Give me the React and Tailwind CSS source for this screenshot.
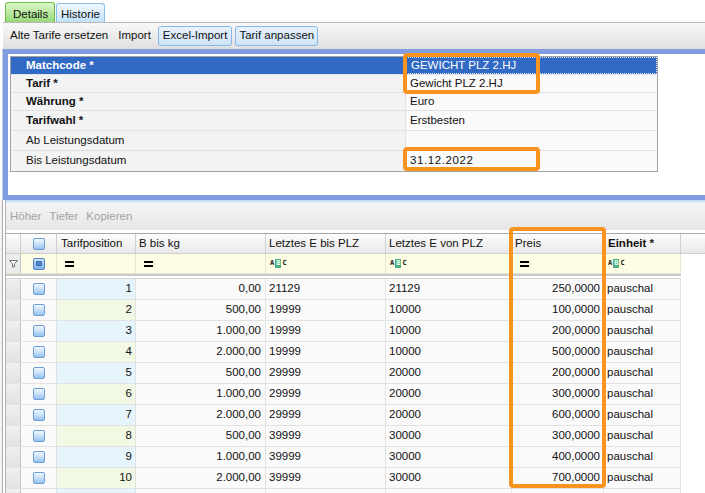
import React from "react";

const rows = [
    [1, "0,00", "21129", "21129", "250,0000"],
    [2, "500,00", "19999", "10000", "100,0000"],
    [3, "1.000,00", "19999", "10000", "200,0000"],
    [4, "2.000,00", "19999", "10000", "500,0000"],
    [5, "500,00", "29999", "20000", "200,0000"],
    [6, "1.000,00", "29999", "20000", "300,0000"],
    [7, "2.000,00", "29999", "20000", "600,0000"],
    [8, "500,00", "39999", "30000", "300,0000"],
    [9, "1.000,00", "39999", "30000", "400,0000"],
    [10, "2.000,00", "39999", "30000", "700,0000"],
];

const props = [
    { label: "Matchcode *", bold: true, value: "GEWICHT PLZ 2.HJ", h: "h-[18px]", sel: true },
    { label: "Tarif *", bold: true, value: "Gewicht PLZ 2.HJ", h: "h-[18px]" },
    { label: "Währung *", bold: true, value: "Euro", h: "h-[18px]" },
    { label: "Tarifwahl *", bold: true, value: "Erstbesten", h: "h-[20px]" },
    { label: "Ab Leistungsdatum", bold: false, value: "", h: "h-[20px]" },
    { label: "Bis Leistungsdatum", bold: false, value: "31.12.2022", h: "h-[20px]", date: true },
];

function Check() {
    return (
        <div className="w-[12px] h-[12px] rounded-[2px] border border-[#6d9fd6] bg-gradient-to-b from-[#eef6fe] via-[#c9e1f8] to-[#93c0ec]" />
    );
}

function FilterCheck() {
    return (
        <div className="w-[12px] h-[12px] rounded-[2px] border border-[#4c84cb] bg-gradient-to-b from-[#cfe4fa] to-[#7fb1e6] flex items-center justify-center">
            <div className="w-[6px] h-[5px] bg-[#4f86cf] border border-[#3b6fb5]" />
        </div>
    );
}

function Equals() {
    return (
        <div className="flex flex-col gap-[2px]">
            <div className="w-[9px] h-[2px] bg-black" />
            <div className="w-[9px] h-[2px] bg-black" />
        </div>
    );
}

function Abc() {
    return (
        <div className="flex items-center font-['DejaVu_Sans_Mono',monospace] text-[7px] font-bold leading-[9px]">
            <span className="px-[1px]">A</span>
            <span className="px-[1px] bg-[#4fae84] text-[#e8fff2]">B</span>
            <span className="px-[1px]">C</span>
        </div>
    );
}

// column widths incl. right border
const W = {
    rh: "w-[15px]",
    cb: "w-[36px]",
    tp: "w-[79px]",
    bkg: "w-[130px]",
    bis: "w-[120px]",
    von: "w-[126px]",
    preis: "w-[92px]",
    einh: "w-[77px]",
};

export default function App() {
    return (
        <div className="relative w-[705px] h-[493px] overflow-hidden bg-white font-['Liberation_Sans',Arial,sans-serif] text-[11.5px] text-[#111]">
            {/* Tabs */}
            <div className="flex h-[22px] items-end pl-[5px] gap-[1px]">
                <div className="h-[20px] w-[50px] rounded-t-[3px] border border-b-0 border-[#6bbb47] bg-gradient-to-b from-[#dcf7c8] to-[#97da78] pl-[7px] pt-[3px]">
                    Details
                </div>
                <div className="h-[19px] w-[49px] rounded-t-[3px] border border-b-0 border-[#8bbfe8] bg-gradient-to-b from-[#f0f8fe] to-[#c2e2f9] pl-[4px] pt-[2px]">
                    Historie
                </div>
            </div>

            {/* Toolbar */}
            <div className="ml-[3px] h-[27px] border-t border-[#b8b8b8] bg-gradient-to-b from-[#f8f8f8] to-[#e0e0e0] flex items-center pl-[7px]">
                <span>Alte Tarife ersetzen</span>
                <span className="ml-[10px]">Import</span>
                <div className="ml-[7px] h-[20px] px-[4px] flex items-center rounded-[3px] border border-[#86b7e8] bg-gradient-to-b from-[#e8f3fd] to-[#cfe4f9]">
                    Excel-Import
                </div>
                <div className="ml-[3px] h-[20px] px-[3px] flex items-center rounded-[3px] border border-[#86b7e8] bg-gradient-to-b from-[#e8f3fd] to-[#cfe4f9]">
                    Tarif anpassen
                </div>
            </div>

            {/* Upper frame */}
            <div className="ml-[2px] border-l border-[#c7cfe0]">
                <div className="border-l-[5px] border-t-[5px] border-b-[5px] border-[#7f9de0] bg-white h-[151px] pl-[2px] pt-[2px]">
                    <div className="w-[648px] border border-[#a3a3a3]">
                        {props.map((p) => (
                            <div
                                key={p.label}
                                className={`flex ${p.h} border-b border-[#e2e2e2] last:border-b-0`}
                            >
                                <div
                                    className={`w-[395px] flex items-center pl-[15px] border-r border-[#e2e2e2] ${
                                        p.sel ? "bg-[#316ac5] text-white" : "bg-[#f3f3f3]"
                                    } ${p.bold ? "font-bold" : ""}`}
                                >
                                    {p.label}
                                </div>
                                <div
                                    className={`flex-1 flex items-center pl-[4px] ${
                                        p.sel
                                            ? "bg-[#316ac5] text-white border border-dotted border-[#dfe8f7]"
                                            : "bg-[#fafafa]"
                                    } ${p.date ? "tracking-[0.6px]" : ""}`}
                                >
                                    {p.value}
                                </div>
                            </div>
                        ))}
                    </div>
                </div>
            </div>

            {/* Lower section */}
            <div className="flex">
                <div className="w-[6px] flex">
                    <div className="w-[3px] border-r border-[#a8a8a8] bg-[#f4f4f4]" />
                    <div className="w-[3px] border-r border-[#b0b0b0] bg-white" />
                </div>
                <div className="flex-1">
                    <div className="h-[3px] bg-gradient-to-b from-[#bcd8f5] to-[#e2effb]" />
                    <div className="h-[27px] bg-gradient-to-b from-[#f5f5f5] to-[#e6e6e6] flex items-center pl-[4px] text-[#a3a3a3]">
                        <span>Höher</span>
                        <span className="ml-[8px]">Tiefer</span>
                        <span className="ml-[8px]">Kopieren</span>
                    </div>
                    <div className="h-[3px] bg-white" />

                    {/* Grid */}
                    <div className="border-t border-[#a9a9a9]">
                        {/* header */}
                        <div className="flex h-[20px] bg-gradient-to-b from-[#fcfcfc] to-[#e8e8e8] border-b border-[#cfcfcf]">
                            <div className={`${W.rh} border-r border-[#cfcfcf]`} />
                            <div className={`${W.cb} border-r border-[#cfcfcf] flex items-center justify-center`}>
                                <Check />
                            </div>
                            <div className={`${W.tp} border-r border-[#cfcfcf] flex items-center pl-[4px]`}>Tarifposition</div>
                            <div className={`${W.bkg} border-r border-[#cfcfcf] flex items-center pl-[3px]`}>B bis kg</div>
                            <div className={`${W.bis} border-r border-[#cfcfcf] flex items-center pl-[3px]`}>Letztes E bis PLZ</div>
                            <div className={`${W.von} border-r border-[#cfcfcf] flex items-center pl-[3px]`}>Letztes E von PLZ</div>
                            <div className={`${W.preis} border-r border-[#cfcfcf] flex items-center pl-[3px]`}>Preis</div>
                            <div className={`${W.einh} border-r border-[#cfcfcf] flex items-center pl-[4px] font-bold`}>Einheit *</div>
                            <div className="flex-1" />
                        </div>

                        {/* filter row */}
                        <div className="flex h-[20px] w-[675px] bg-[#fefde4] border-b border-[#e4e4d0]">
                            <div className={`${W.rh} border-r border-[#c4c4c4] bg-[#ececec] flex items-center justify-center`}>
                                <svg width="9" height="9" viewBox="0 0 9 9">
                                    <path d="M0.5 1.5 H8.5 L5.5 4.8 V8 H3.5 V4.8 Z" fill="white" stroke="#707070" strokeWidth="1" />
                                </svg>
                            </div>
                            <div className={`${W.cb} border-r border-[#e6e6d2] flex items-center justify-center`}>
                                <FilterCheck />
                            </div>
                            <div className={`${W.tp} border-r border-[#e6e6d2] flex items-center pl-[8px]`}><Equals /></div>
                            <div className={`${W.bkg} border-r border-[#e6e6d2] flex items-center pl-[8px]`}><Equals /></div>
                            <div className={`${W.bis} border-r border-[#e6e6d2] flex items-center pl-[3px]`}><Abc /></div>
                            <div className={`${W.von} border-r border-[#e6e6d2] flex items-center pl-[3px]`}><Abc /></div>
                            <div className={`${W.preis} border-r border-[#e6e6d2] flex items-center pl-[8px]`}><Equals /></div>
                            <div className={`${W.einh} border-r border-[#e6e6d2] flex items-center pl-[3px]`}><Abc /></div>
                        </div>

                        {/* separator */}
                        <div className="w-[675px] h-[5px] border-t-2 border-[#c9c9c9] border-b border-b-[#d6d6d6] bg-white" />

                        {/* data rows */}
                        {[...rows, [null, "", "", "", ""]].map((r, i) => (
                            <div key={i} className="flex h-[21px] w-[675px] border-b border-[#e2e2e2]">
                                <div className={`${W.rh} border-r border-[#c4c4c4] bg-gradient-to-b from-[#f0f0f0] to-[#e2e2e2]`} />
                                <div className={`${W.cb} border-r border-[#e2e2e2] bg-[#fafafa] flex items-center justify-center`}>
                                    <Check />
                                </div>
                                <div
                                    className={`${W.tp} border-r border-[#e2e2e2] flex items-center justify-end pr-[3px] ${
                                        i % 2 === 0 ? "bg-[#e6f4fb]" : "bg-[#f1f9e5]"
                                    }`}
                                >
                                    {r[0]}
                                </div>
                                <div className={`${W.bkg} border-r border-[#e2e2e2] bg-[#fafafa] flex items-center justify-end pr-[4px]`}>{r[1]}</div>
                                <div className={`${W.bis} border-r border-[#e2e2e2] bg-[#fafafa] flex items-center pl-[3px]`}>{r[2]}</div>
                                <div className={`${W.von} border-r border-[#e2e2e2] bg-[#fafafa] flex items-center pl-[3px]`}>{r[3]}</div>
                                <div className={`${W.preis} border-r border-[#e2e2e2] bg-[#fafafa] flex items-center justify-end pr-[3px]`}>{r[4]}</div>
                                <div className={`${W.einh} border-r border-[#e2e2e2] bg-[#fafafa] flex items-center pl-[3px]`}>
                                    {r[0] ? "pauschal" : ""}
                                </div>
                            </div>
                        ))}
                    </div>
                </div>
            </div>

            {/* Orange highlight markers */}
            <div className="absolute left-[403px] top-[53px] w-[137px] h-[41px] rounded-[4px] border-[4px] border-[#f7931e]" />
            <div className="absolute left-[403px] top-[147px] w-[137px] h-[24px] rounded-[4px] border-[4px] border-[#f7931e]" />
            <div className="absolute left-[509px] top-[227px] w-[97px] h-[261px] rounded-[4px] border-[4px] border-[#f7931e]" />
        </div>
    );
}
